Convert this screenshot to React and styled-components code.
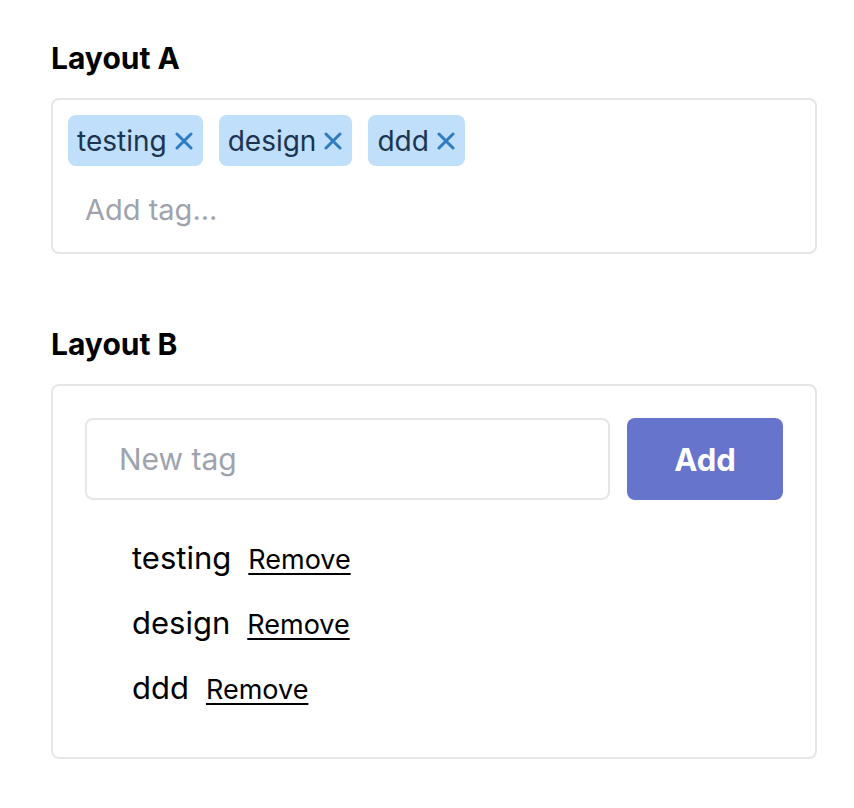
import React, { useState } from "react";
import styled, { createGlobalStyle } from "styled-components";

const GlobalStyle = createGlobalStyle`
  body {
    margin: 0;
    background: #ffffff;
    font-family: Inter, "Liberation Sans", sans-serif;
    color: #000;
  }
`;

const Page = styled.div`
  width: 766px;
  padding: 38px 0 0 51px;
`;

const Heading = styled.h3`
  margin: 0 0 20px;
  font-size: 30px;
  line-height: 40px;
  font-weight: 700;
  letter-spacing: 0;
`;

const Section = styled.section`
  margin-bottom: 70px;
`;

const Box = styled.div`
  border: 2px solid #e6e6e6;
  border-radius: 8px;
  padding: ${(p) => p.$pad};
`;

const TagWrap = styled.div`
  display: flex;
  flex-wrap: wrap;
  gap: 16px;
`;

const Tag = styled.span`
  display: inline-flex;
  align-items: center;
  gap: 8px;
  height: 51px;
  padding: 0 10px 0 9px;
  background: #bfdffa;
  border-radius: 8px;
  color: #1b3452;
  font-size: 28px;
`;

const CloseBtn = styled.button`
  border: none;
  background: none;
  padding: 0;
  display: flex;
  align-items: center;
  color: #2f7cc0;
  cursor: pointer;
`;

const TagInput = styled.input`
  flex-basis: 100%;
  height: 55px;
  border: none;
  outline: none;
  padding: 0 17px;
  font-family: inherit;
  font-size: 29px;
  color: #1b3452;
  &::placeholder {
    color: #9ea3ad;
  }
`;

const FormRow = styled.div`
  display: flex;
  gap: 17px;
`;

const TextInput = styled.input`
  flex: 1;
  min-width: 0;
  height: 82px;
  box-sizing: border-box;
  border: 2px solid #e6e6e6;
  border-radius: 8px;
  padding: 0 32px;
  font-family: inherit;
  font-size: 30px;
  outline: none;
  &::placeholder {
    color: #9ea3ad;
  }
`;

const AddButton = styled.button`
  flex-shrink: 0;
  width: 156px;
  height: 82px;
  border: none;
  border-radius: 8px;
  background: #6674cc;
  color: #fff;
  font-family: inherit;
  font-size: 31px;
  font-weight: 700;
  cursor: pointer;
`;

const List = styled.ul`
  list-style: none;
  margin: 25px 0 5px;
  padding: 0 0 0 47px;
`;

const Item = styled.li`
  display: flex;
  align-items: center;
  gap: 17px;
  height: 65px;
  font-size: 31px;
`;

const RemoveBtn = styled.button`
  border: none;
  background: none;
  padding: 0;
  margin-top: 4px;
  font-family: inherit;
  font-size: 27px;
  color: #000;
  text-decoration: underline;
  text-decoration-thickness: 2px;
  text-underline-offset: 4px;
  cursor: pointer;
`;

const XIcon = () => (
  <svg width="18" height="18" viewBox="0 0 18 18">
    <path d="M2 2 L16 16 M16 2 L2 16" stroke="currentColor" strokeWidth="3" strokeLinecap="round" />
  </svg>
);

export default function App() {
  const [tags, setTags] = useState(["testing", "design", "ddd"]);
  const remove = (t) => setTags(tags.filter((x) => x !== t));

  return (
    <Page>
      <GlobalStyle />
      <Section>
        <Heading>Layout A</Heading>
        <Box $pad="15px">
          <TagWrap>
            {tags.map((t) => (
              <Tag key={t}>
                {t}
                <CloseBtn onClick={() => remove(t)} aria-label={`Remove ${t}`}>
                  <XIcon />
                </CloseBtn>
              </Tag>
            ))}
            <TagInput placeholder="Add tag..." />
          </TagWrap>
        </Box>
      </Section>
      <Section>
        <Heading>Layout B</Heading>
        <Box $pad="32px">
          <FormRow>
            <TextInput placeholder="New tag" />
            <AddButton>Add</AddButton>
          </FormRow>
          <List>
            {tags.map((t) => (
              <Item key={t}>
                {t}
                <RemoveBtn onClick={() => remove(t)}>Remove</RemoveBtn>
              </Item>
            ))}
          </List>
        </Box>
      </Section>
    </Page>
  );
}
